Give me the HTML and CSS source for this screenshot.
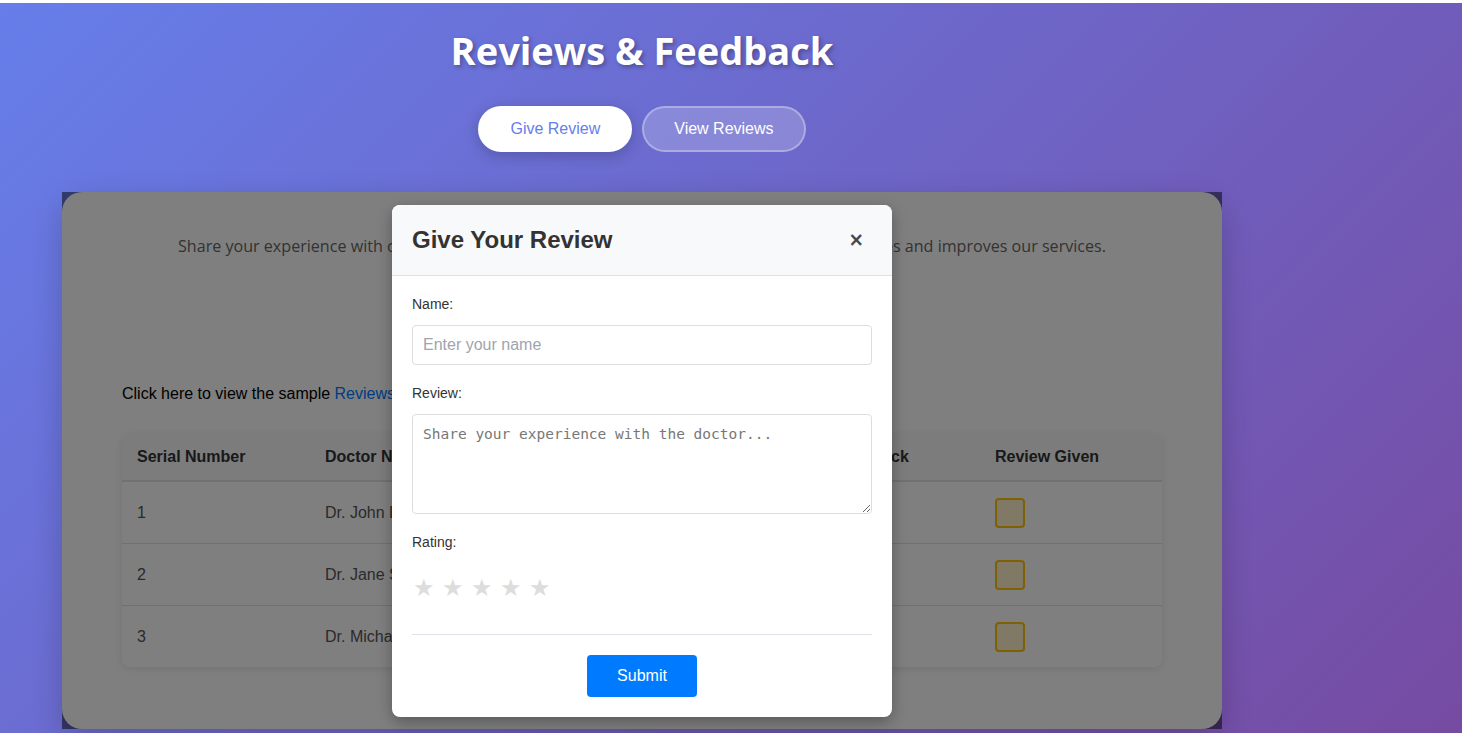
FILE: index.html
```html
<!DOCTYPE html>
<html lang="en">
<head>
<meta charset="utf-8">
<title>Reviews &amp; Feedback</title>
<link rel="stylesheet" href="styles.css">
</head>
<body>
<div class="page">
  <div class="container">
    <header class="hero">
      <h1 class="hero-title">Reviews &amp; Feedback</h1>
      <div class="tabs">
        <button class="tab tab-active">Give Review</button>
        <button class="tab tab-ghost">View Reviews</button>
      </div>
    </header>

    <section class="card">
      <p class="intro">Share your experience with our doctors. Your feedback helps other patients make better choices and improves our services.</p>
      <p class="sample">Click here to view the sample <a href="#" class="sample-link">Reviews</a></p>

      <div class="table-wrap">
        <table class="reviews">
          <thead>
            <tr>
              <th class="c-serial">Serial Number</th>
              <th class="c-doctor">Doctor Name</th>
              <th class="c-spec">Specialization</th>
              <th class="c-feed">Feedback</th>
              <th class="c-given">Review Given</th>
            </tr>
          </thead>
          <tbody>
            <tr>
              <td>1</td>
              <td>Dr. John Doe</td>
              <td>Cardiologist</td>
              <td></td>
              <td><span class="check"></span></td>
            </tr>
            <tr>
              <td>2</td>
              <td>Dr. Jane Smith</td>
              <td>Dermatologist</td>
              <td></td>
              <td><span class="check"></span></td>
            </tr>
            <tr>
              <td>3</td>
              <td>Dr. Michael Brown</td>
              <td>Neurologist</td>
              <td></td>
              <td><span class="check"></span></td>
            </tr>
          </tbody>
        </table>
      </div>

      <div class="overlay">
        <div class="modal">
          <div class="modal-head">
            <h2 class="modal-title">Give Your Review</h2>
            <span class="modal-close">&times;</span>
          </div>
          <form class="modal-body">
            <div class="group">
              <label class="label">Name:</label>
              <input class="field" type="text" placeholder="Enter your name">
            </div>
            <div class="group">
              <label class="label">Review:</label>
              <textarea class="field area" placeholder="Share your experience with the doctor..."></textarea>
            </div>
            <div class="group">
              <label class="label">Rating:</label>
              <div class="stars"><span class="star">&#9733;</span><span class="star">&#9733;</span><span class="star">&#9733;</span><span class="star">&#9733;</span><span class="star">&#9733;</span></div>
            </div>
            <div class="modal-foot">
              <button type="button" class="submit">Submit</button>
            </div>
          </form>
        </div>
      </div>
    </section>
  </div>
</div>
</body>
</html>
```

FILE: styles.css
```css
* { box-sizing: border-box; }

html, body {
  margin: 0;
  padding: 0;
}

body {
  background: #ffffff;
  padding-top: 3px;
  font-family: "Liberation Sans", Arial, sans-serif;
  overflow: hidden;
}

.page {
  min-height: 730px;
  background: linear-gradient(135deg, #667eea 0%, #764ba2 100%);
}

.container {
  width: 1160px;
  margin-left: 62px;
}

.hero {
  padding-top: 20px;
  display: flex;
  flex-direction: column;
  align-items: center;
}

.hero-title {
  margin: 0 0 29px;
  font-family: "Open Sans", "Noto Sans", sans-serif;
  font-weight: 700;
  font-size: 38px;
  line-height: 54px;
  letter-spacing: 0;
  color: #ffffff;
  text-shadow: 2px 2px 4px rgba(0, 0, 0, 0.3);
}

.tabs {
  display: flex;
  gap: 10px;
  margin-bottom: 40px;
}

.tab {
  font-family: "Liberation Sans", Arial, sans-serif;
  font-size: 16px;
  line-height: 18px;
  padding: 12px 30px;
  border-radius: 25px;
  border: 2px solid transparent;
  cursor: pointer;
}

.tab-active {
  background: #ffffff;
  color: #667eea;
  border-color: #ffffff;
  box-shadow: 0 4px 15px rgba(0, 0, 0, 0.2);
}

.tab-ghost {
  background: rgba(255, 255, 255, 0.2);
  color: #ffffff;
  border-color: rgba(255, 255, 255, 0.3);
}

.card {
  position: relative;
  background: #ffffff;
  border-radius: 20px;
  padding: 41px 60px 60px;
  box-shadow: 0 10px 30px rgba(0, 0, 0, 0.2);
  height: 537px;
}

.intro {
  margin: 0 0 125px;
  text-align: center;
  font-family: "Open Sans", "Noto Sans", sans-serif;
  font-size: 16.1px;
  line-height: 27px;
  color: #666666;
}

.sample {
  margin: 0 0 31px;
  font-size: 16px;
  line-height: 18px;
  color: #000000;
}

.sample-link {
  color: #007bff;
  text-decoration: none;
}

.table-wrap {
  border-radius: 8px;
  overflow: hidden;
  box-shadow: 0 2px 10px rgba(0, 0, 0, 0.1);
}

.reviews {
  width: 100%;
  border-collapse: collapse;
  table-layout: fixed;
  background: #ffffff;
}

.c-serial { width: 188px; }
.c-doctor { width: 255px; }
.c-spec { width: 255px; }
.c-feed { width: 160px; }
.c-given { width: 182px; }

.reviews th {
  background: #f8f9fa;
  color: #333333;
  font-weight: 700;
  font-size: 16px;
  line-height: 18px;
  text-align: left;
  padding: 14px 15px;
  border-bottom: 2px solid #dee2e6;
}

.reviews td {
  color: #555555;
  font-size: 16px;
  line-height: 30px;
  padding: 16px 15px 15px;
  border-bottom: 1px solid #dee2e6;
  vertical-align: middle;
}

.reviews tbody tr:last-child td {
  border-bottom: none;
}

.check {
  display: block;
  width: 30px;
  height: 30px;
  border: 2px solid #ffc107;
  border-radius: 4px;
  background: #fff3cd;
}

.overlay {
  position: absolute;
  inset: 0;
  background: rgba(0, 0, 0, 0.5);
  display: flex;
  align-items: center;
  justify-content: center;
}

.modal {
  width: 500px;
  background: #ffffff;
  border-radius: 8px;
  overflow: hidden;
  box-shadow: 0 5px 15px rgba(0, 0, 0, 0.3);
}

.modal-head {
  display: flex;
  align-items: center;
  justify-content: space-between;
  padding: 20px;
  background: #f8f9fa;
  border-bottom: 1px solid #dee2e6;
}

.modal-title {
  margin: 0;
  font-size: 24px;
  line-height: 30px;
  font-weight: 700;
  color: #333333;
}

.modal-close {
  font-size: 23px;
  line-height: 30px;
  font-weight: 400;
  color: #444444;
  margin-right: 9px;
  -webkit-text-stroke: 0.6px #444444;
}

.modal-body {
  padding: 20px;
  margin: 0;
}

.group {
  margin-bottom: 20px;
}

.label {
  display: block;
  font-size: 14px;
  line-height: 16px;
  color: #333333;
  margin-bottom: 13px;
}

.field {
  display: block;
  width: 100%;
  height: 40px;
  padding: 10px;
  border: 1px solid #dddddd;
  border-radius: 4px;
  font-family: "Liberation Sans", Arial, sans-serif;
  font-size: 16px;
  color: #333333;
  background: #ffffff;
}

.field::placeholder {
  color: #a0a4ad;
}

.area {
  height: 100px;
  resize: vertical;
  font-family: "DejaVu Sans Mono", monospace;
  font-size: 14.5px;
  line-height: 19px;
}

.area::placeholder {
  color: #777777;
}

.stars {
  display: flex;
  padding: 10px 0;
  height: 51px;
  align-items: center;
}

.star {
  font-family: "DejaVu Sans", sans-serif;
  font-size: 24px;
  line-height: 30px;
  color: #dddddd;
  width: 29px;
  padding-left: 1px;
}

.modal-foot {
  border-top: 1px solid #dee2e6;
  padding-top: 20px;
  display: flex;
  justify-content: center;
}

.submit {
  background: #007bff;
  color: #ffffff;
  border: none;
  border-radius: 4px;
  padding: 12px 30px;
  font-family: "Liberation Sans", Arial, sans-serif;
  font-size: 16px;
  line-height: 18px;
  cursor: pointer;
}
```
